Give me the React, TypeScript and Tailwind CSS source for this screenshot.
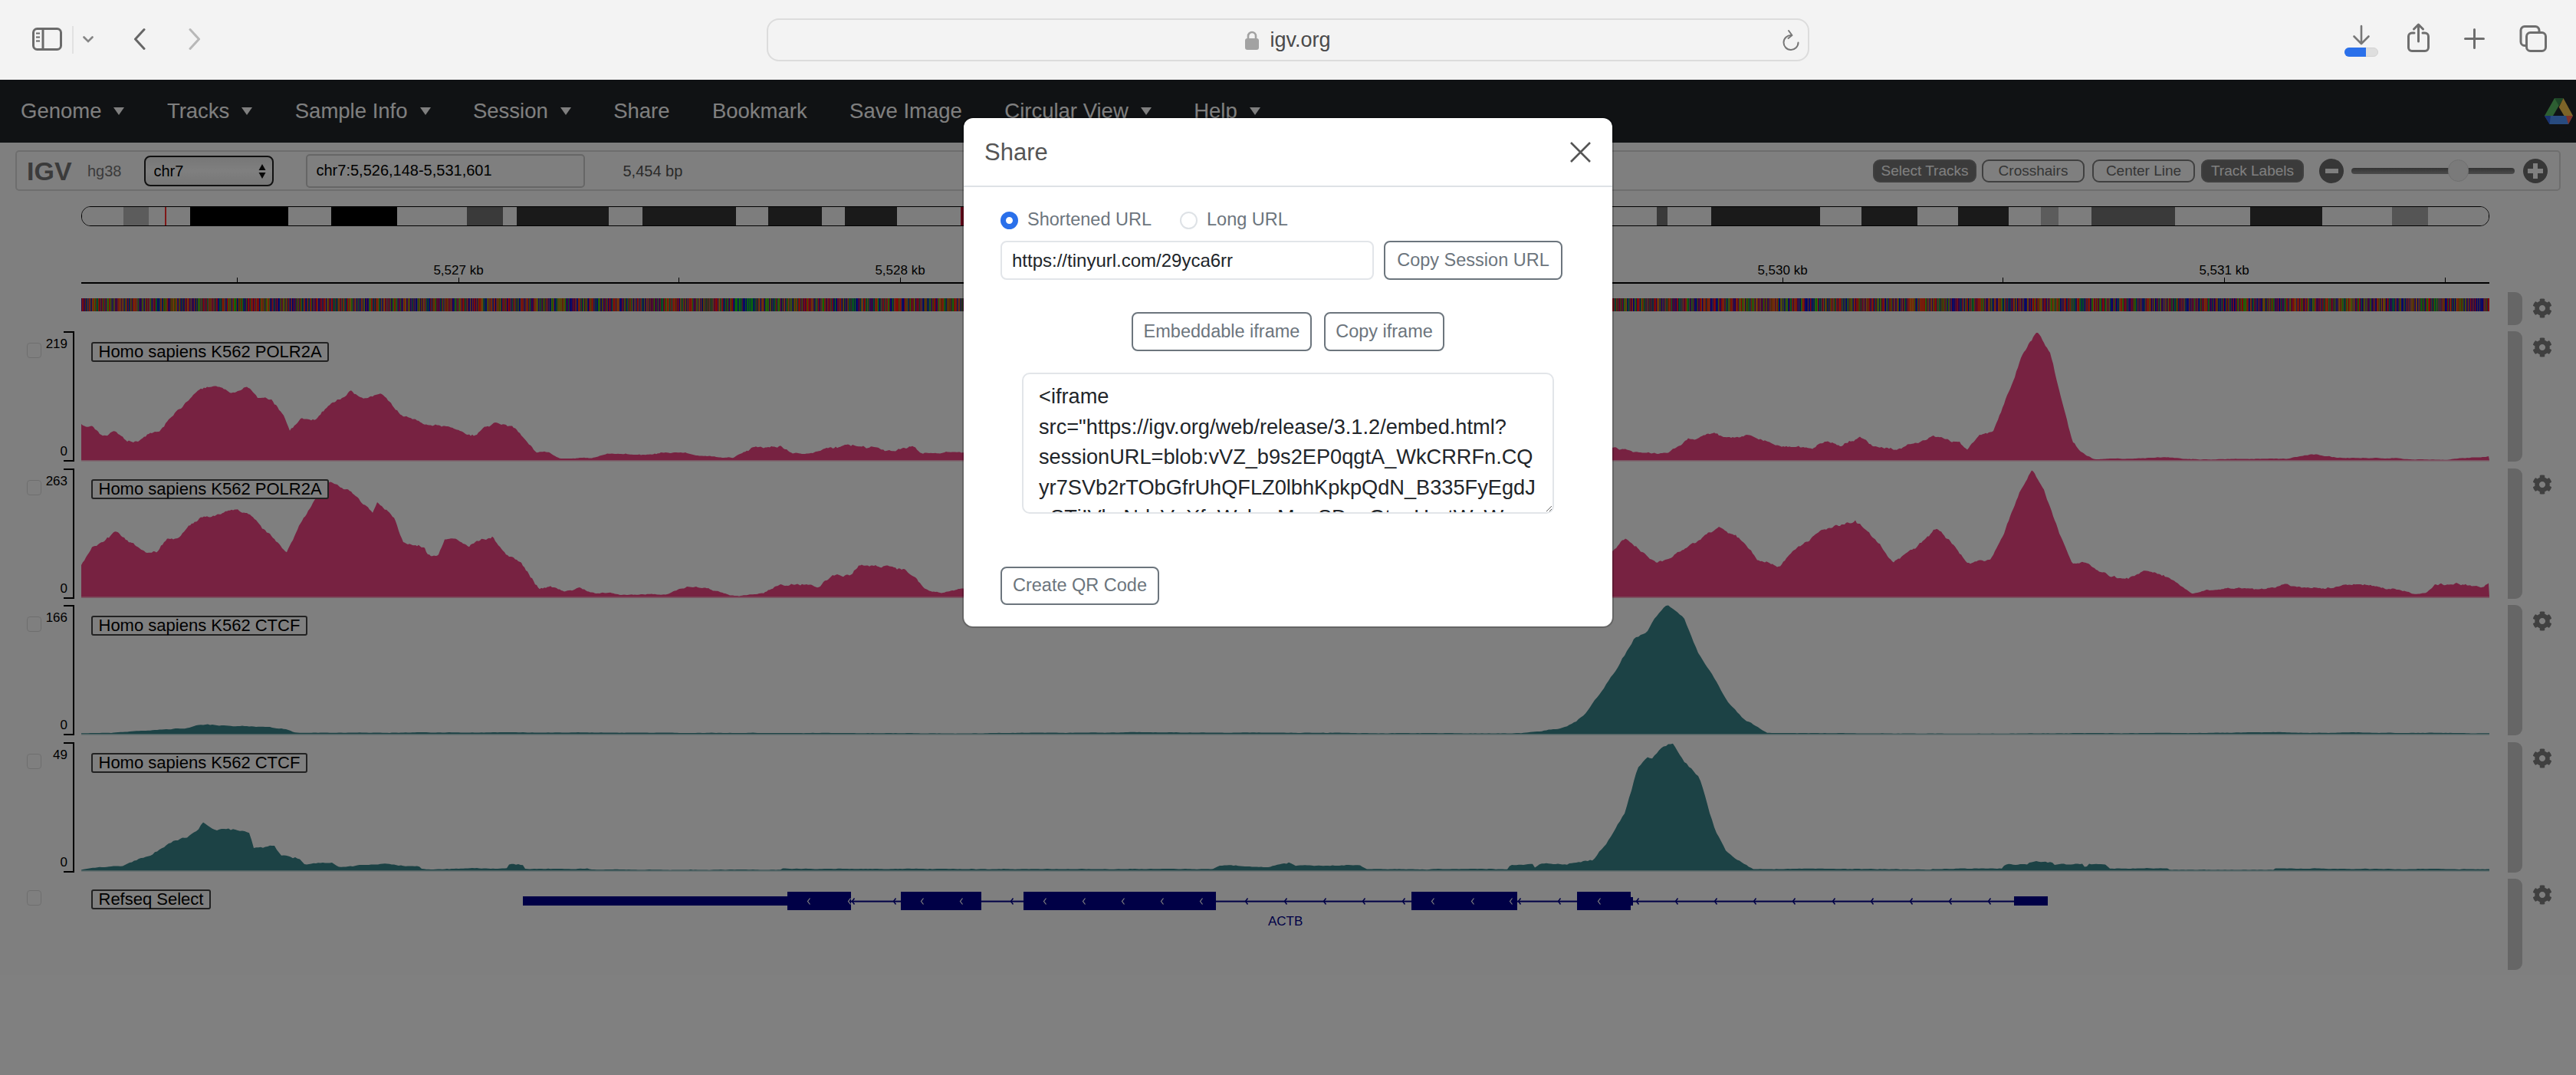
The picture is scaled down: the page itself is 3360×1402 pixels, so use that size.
import { FaCog } from 'react-icons/fa'

type Pt = [number, number]

// ── Data helpers ───────────────────────────────────────────────────────────

function rng(seed: number) {
  let s = seed
  return () => {
    s = (s + 0x6d2b79f5) | 0
    let t = Math.imul(s ^ (s >>> 15), 1 | s)
    t = (t + Math.imul(t ^ (t >>> 7), 61 | t)) ^ t
    return ((t ^ (t >>> 14)) >>> 0) / 4294967296
  }
}

const mapPts = (x0: number, sx: number, y0: number, list: Pt[]): Pt[] =>
  list.map(([x, y]) => [x0 + x / sx, y0 + y / 3])

// Turn the hand-read outline into a jagged coverage polygon
function coverage(outline: Pt[], base: number, seed: number, step: number, jitter: number) {
  const rand = rng(seed)
  const out: string[] = [`106,${base}`]
  let i = 0
  let walk = 0
  for (let x = 106; x <= 3247; x += step) {
    while (i < outline.length - 2 && outline[i + 1][0] < x) i++
    const [x1, y1] = outline[i]
    const [x2, y2] = outline[i + 1]
    const t = x2 === x1 ? 1 : Math.min(1, Math.max(0, (x - x1) / (x2 - x1)))
    const y = y1 + (y2 - y1) * t
    const h = base - y
    walk = walk * 0.85 + (rand() - 0.5) * jitter
    const n = (walk + (rand() - 0.5) * jitter * 0.5) * Math.min(1, 0.12 + h * 0.05)
    out.push(`${x},${Math.min(base, y + n).toFixed(1)}`)
  }
  out.push(`3247,${base}`)
  return out.join(' ')
}

const POL1: Pt[] = [
  ...mapPts(0, 1.2444, 400, [[132, 460], [150, 470], [165, 510], [185, 490], [208, 525], [225, 520], [240, 495], [258, 492], [280, 430], [300, 380], [325, 325], [350, 315], [375, 340], [400, 315], [420, 355], [440, 365], [460, 420], [470, 485], [490, 440], [510, 440], [535, 385], [570, 330], [590, 360], [620, 345], [650, 420], [690, 455], [720, 470], [770, 500], [805, 452], [835, 475], [870, 570], [890, 575], [910, 595], [960, 590], [990, 578], [1040, 582], [1060, 575], [1115, 570], [1130, 585], [1190, 590], [1220, 552], [1265, 547], [1285, 575], [1310, 575], [1340, 555], [1390, 542], [1450, 565], [1480, 545], [1495, 570], [1564, 572]]),
  ...mapPts(2100, 1.2444, 400, [[5, 553], [30, 562], [60, 575], [95, 572], [125, 517], [170, 497], [195, 518], [235, 508], [270, 545], [330, 553], [350, 525], [375, 542], [405, 510], [425, 543], [465, 558], [525, 508], [565, 535], [580, 555], [600, 500], [622, 490], [640, 380], [670, 180], [693, 97], [715, 180], [735, 380], [750, 525], [765, 570], [785, 597], [900, 590], [960, 597], [1100, 595], [1145, 577], [1180, 590], [1270, 592], [1300, 598], [1360, 599], [1395, 590], [1427, 587]]),
]

const POL2: Pt[] = [
  ...mapPts(0, 1.2444, 400, [[132, 1010], [150, 935], [170, 915], [190, 878], [220, 930], [240, 965], [255, 960], [270, 910], [290, 905], [310, 855], [325, 828], [350, 820], [385, 803], [410, 825], [440, 900], [465, 962], [485, 860], [510, 760], [535, 680], [565, 715], [605, 800], [612, 765], [640, 825], [655, 925], [690, 940], [695, 970], [710, 975], [722, 910], [740, 907], [760, 935], [800, 900], [820, 965], [845, 1000], [875, 1105], [895, 1095], [915, 1115], [940, 1103], [965, 1120], [990, 1118], [1005, 1128], [1080, 1125], [1115, 1095], [1150, 1098], [1185, 1130], [1200, 1132], [1240, 1120], [1260, 1093], [1300, 1085], [1330, 1100], [1350, 1060], [1380, 1050], [1397, 1008], [1440, 1013], [1470, 1035], [1485, 1060], [1500, 1100], [1530, 1118], [1564, 1105]]),
  ...mapPts(2100, 1.2444, 400, [[5, 960], [25, 912], [50, 960], [75, 997], [100, 982], [115, 955], [135, 925], [178, 870], [205, 895], [240, 990], [275, 1010], [300, 945], [340, 885], [398, 835], [430, 910], [460, 1000], [495, 950], [530, 868], [550, 910], [580, 1005], [617, 990], [640, 880], [665, 720], [685, 632], [705, 720], [730, 890], [750, 1005], [775, 1005], [795, 1045], [830, 1070], [875, 1037], [905, 1060], [945, 1125], [1005, 1098], [1055, 1105], [1095, 1090], [1140, 1105], [1185, 1097], [1235, 1090], [1280, 1107], [1305, 1124], [1325, 1118], [1340, 1090], [1390, 1085], [1415, 1102], [1427, 1085]]),
]

const CTCF1: Pt[] = [
  ...mapPts(0, 1.2444, 780, [[132, 529], [180, 527], [240, 517], [300, 507], [327, 492], [360, 500], [390, 500], [440, 507], [465, 515], [480, 527], [660, 526], [850, 526], [1560, 529]]),
  ...mapPts(1260, 1.2444, 780, [[320, 525], [480, 527], [860, 529], [900, 528], [935, 520], [965, 510], [985, 490], [1005, 450], [1030, 370], [1060, 260], [1085, 155], [1105, 135], [1120, 70], [1138, 27], [1165, 75], [1190, 220], [1215, 310], [1235, 400], [1260, 470], [1300, 528], [1568, 530]]),
  ...mapPts(2400, 1.6333, 780, [[460, 529], [790, 527], [940, 525], [1000, 527], [1070, 526], [1383, 529]]),
]

const CTCF2: Pt[] = [
  ...mapPts(0, 1.2444, 780, [[132, 1063], [160, 1052], [200, 1047], [230, 1018], [255, 990], [280, 945], [300, 940], [322, 900], [328, 870], [345, 900], [385, 905], [405, 915], [412, 975], [445, 965], [455, 1007], [485, 1020], [495, 1043], [515, 1030], [540, 1035], [550, 1050], [630, 1035], [680, 1050], [685, 1060], [825, 1058], [826, 1042], [850, 1042], [852, 1058], [955, 1058], [958, 1063], [1268, 1063], [1269, 1058], [1400, 1060], [1560, 1060]]),
  ...mapPts(1260, 1.2444, 780, [[400, 1060], [412, 1047], [490, 1050], [525, 1030], [535, 1047], [640, 1043], [650, 1060], [880, 1060], [883, 1043], [920, 1043], [922, 1058], [932, 1043], [975, 1040], [1018, 1030], [1040, 965], [1070, 840], [1090, 670], [1105, 625], [1115, 630], [1130, 580], [1148, 565], [1165, 630], [1190, 700], [1215, 900], [1235, 1000], [1278, 1060], [1500, 1060], [1568, 1063]]),
  ...mapPts(2400, 1.6333, 780, [[100, 1062], [262, 1058], [348, 1058], [350, 1042], [400, 1042], [402, 1033], [452, 1033], [455, 1042], [518, 1042], [524, 1060], [528, 1042], [568, 1042], [572, 1058], [698, 1058], [700, 1063], [923, 1063], [925, 1057], [1135, 1060], [1150, 1060], [1383, 1060]]),
]

// Band edges in page x
const BANDS: { x1: number; x2: number; fill: string }[] = [
  { x1: 160, x2: 193, fill: '#b8b8b8' }, { x1: 214, x2: 216, fill: '#ff3030' }, { x1: 247, x2: 375, fill: '#000000' },
  { x1: 431, x2: 517, fill: '#000000' }, { x1: 608, x2: 655, fill: '#747474' }, { x1: 673, x2: 793, fill: '#343434' },
  { x1: 837, x2: 959, fill: '#343434' }, { x1: 1001, x2: 1071, fill: '#343434' }, { x1: 1101, x2: 1169, fill: '#343434' },
  { x1: 1252, x2: 1262, fill: '#c01030' }, { x1: 2160, x2: 2174, fill: '#747474' }, { x1: 2231, x2: 2373, fill: '#343434' },
  { x1: 2427, x2: 2500, fill: '#343434' }, { x1: 2553, x2: 2619, fill: '#343434' }, { x1: 2661, x2: 2684, fill: '#b8b8b8' },
  { x1: 2727, x2: 2836, fill: '#747474' }, { x1: 2934, x2: 3028, fill: '#343434' }, { x1: 3119, x2: 3166, fill: '#ababab' },
]

// One base is under a pixel wide here, so neighbours blend as they do on the canvas
const SEQ = (() => {
  const rand = rng(41)
  const bars: { x: number; fill: string }[] = []
  for (let x = 0; x < 3141; x += 0.72) {
    const r = rand()
    const greenZone = (x > 850 && x < 880) || (x > 1000 && x < 1012)
    let fill = '#0000c8'
    if (greenZone ? r < 0.6 : r < 0.18) fill = '#00c800'
    else if (r < 0.4) fill = '#d17105'
    else if (r < 0.68) fill = '#ff0000'
    bars.push({ x, fill })
  }
  return bars
})()

const EXONS: Pt[] = [[1027, 1110], [1175, 1280], [1335, 1586], [1841, 1979], [2057, 2127]]
const INTRON_ARROWS = [1113, 1167, 1320, 1626, 1677, 1728, 1779, 1831, 1982, 2034, 2136, 2187, 2238, 2289, 2340, 2392, 2442, 2493, 2544, 2595]
const EXON_ARROWS = [1055, 1108, 1203, 1254, 1363, 1414, 1465, 1516, 1567, 1869, 1921, 1971, 2086]

const NAV_ITEMS = [
  { label: 'Genome', caret: true },
  { label: 'Tracks', caret: true },
  { label: 'Sample Info', caret: true },
  { label: 'Session', caret: true },
  { label: 'Share', caret: false },
  { label: 'Bookmark', caret: false },
  { label: 'Save Image', caret: false },
  { label: 'Circular View', caret: true },
  { label: 'Help', caret: true },
]

const IFRAME_TEXT = `<iframe
src="https://igv.org/web/release/3.1.2/embed.html?
sessionURL=blob:vVZ_b9s2EP0qgtA_WkCRRFn.CQ
yr7SVb2rTObGfrUhQFLZ0lbhKpkpQdN_B335FyEgdJ
uSTjIVbsNdsVqXfgWyhgrMppSDzqGtqgUrgtWaW`

// ── Browser chrome ─────────────────────────────────────────────────────────

function BrowserBar() {
  return (
    <div className="flex h-[104px] items-center bg-[#f3f3f3]">
      <div className="flex w-[1000px] shrink-0 items-center pl-[42px]">
        <svg width="39" height="56" viewBox="0 0 39 56" fill="none" stroke="#6b6b6b" strokeWidth="3">
          <rect x="1.5" y="13.5" width="36" height="27" rx="5" />
          <path d="M14 13v28" />
          <path d="M5 19.5h5M5 24.5h5M5 29.5h5" strokeWidth="2" />
        </svg>
        <div className="ml-[13px] h-[36px] w-[2px] bg-[#e2e2e2]" />
        <svg className="ml-[12px]" width="14" height="56" viewBox="0 0 14 56" fill="none" stroke="#858585" strokeWidth="2.6" strokeLinecap="round">
          <path d="M1.5 24.5 7 30l5.5-5.5" />
        </svg>
        <svg className="ml-[52px]" width="16" height="56" viewBox="0 0 16 56" fill="none" stroke="#666666" strokeWidth="3" strokeLinecap="round" strokeLinejoin="round">
          <path d="M14 14.5 2.5 27 14 39.5" />
        </svg>
        <svg className="ml-[56px]" width="16" height="56" viewBox="0 0 16 56" fill="none" stroke="#b8b8b8" strokeWidth="3" strokeLinecap="round" strokeLinejoin="round">
          <path d="M2 14.5 13.5 27 2 39.5" />
        </svg>
      </div>

      <div className="relative flex h-[56px] w-[1360px] shrink-0 items-center justify-center gap-[14px] rounded-[16px] border-2 border-[#dcdcdc]">
        <svg width="18" height="25" viewBox="0 0 18 25" fill="none">
          <rect y="10" width="18" height="15" rx="3" fill="#a2a2a2" />
          <path d="M4 11V7a5 5 0 0 1 10 0v4" stroke="#a2a2a2" strokeWidth="2.6" />
        </svg>
        <span className="text-[27px] leading-none text-[#4a4a4a]">igv.org</span>
        <svg className="absolute right-[11px] top-[12px]" width="22" height="28" viewBox="0 0 22 28" fill="none" stroke="#777777" strokeWidth="2" strokeLinecap="round" strokeLinejoin="round">
          <path d="M11.5 8A9.5 9.5 0 1 0 20.5 17.5" />
          <path d="M8 2l4.5 6-5 4" />
        </svg>
      </div>

      <div className="flex items-center pl-[698px]">
        <svg width="44" height="56" viewBox="0 0 44 56" fill="none">
          <path d="M22 10v22M12.5 23.5 22 33l9.5-9.5" stroke="#777777" strokeWidth="2.6" strokeLinecap="round" strokeLinejoin="round" />
          <rect x="0.5" y="38.5" width="43" height="11" rx="5.5" fill="#dedede" stroke="#d2d2d2" />
          <path d="M6 38h22v12H6a6 6 0 0 1 0-12z" fill="#2a70ea" />
        </svg>
        <svg className="ml-[38px]" width="29" height="56" viewBox="0 0 29 56" fill="none" stroke="#6e6e6e" strokeWidth="3" strokeLinecap="round" strokeLinejoin="round">
          <path d="M9 19H6a4.5 4.5 0 0 0-4.5 4.5V38A4.5 4.5 0 0 0 6 42.5h17a4.5 4.5 0 0 0 4.5-4.5V23.5A4.5 4.5 0 0 0 23 19h-3" />
          <path d="M14.5 8.5V30M8.5 14l6-6 6 6" />
        </svg>
        <svg className="ml-[45px]" width="27" height="56" viewBox="0 0 27 56" fill="none" stroke="#6e6e6e" strokeWidth="3" strokeLinecap="round">
          <path d="M13.5 14.5v24M1.5 26.5h24" />
        </svg>
        <svg className="ml-[45px]" width="36" height="56" viewBox="0 0 36 56" fill="none" stroke="#6e6e6e" strokeWidth="3" strokeLinecap="round">
          <rect x="9.5" y="18.5" width="25" height="24" rx="5" />
          <path d="M7.5 35.5H7a5 5 0 0 1-5-5v-15a5 5 0 0 1 5-5h14a5 5 0 0 1 5 5V17" />
        </svg>
      </div>
    </div>
  )
}

// ── IGV navbar and toolbar ─────────────────────────────────────────────────

function Navbar() {
  return (
    <div className="flex h-[82px] items-center gap-[55.4px] bg-[#212529] pl-[27px] pr-[4px] text-[27.5px] leading-none text-white">
      {NAV_ITEMS.map(item => (
        <div key={item.label} className="flex items-center gap-[16px]">
          <span>{item.label}</span>
          {item.caret && <span className="h-0 w-0 border-x-[7px] border-t-[10px] border-x-transparent border-t-white" />}
        </div>
      ))}
      <svg className="ml-auto" width="37" height="34" viewBox="0 0 37 34">
        <polygon points="13,0 24.5,0 11,23 0,23" fill="#5abe64" />
        <polygon points="18.7,11.7 24.5,0 37,23 25.5,23" fill="#fac850" />
        <polygon points="13,0 24.5,0 18.7,10" fill="#3c8c50" />
        <polygon points="0,23 37,23 31,34 6.5,34" fill="#5096ff" />
        <polygon points="28,23 37,23 31,34" fill="#ff6450" />
        <polygon points="0,23 8,23 6.5,34" fill="#3264dc" />
      </svg>
    </div>
  )
}

function ToggleButton({ label, on, className }: { label: string; on?: boolean; className: string }) {
  return (
    <button className={`flex h-[30px] items-center justify-center rounded-[9px] border-2 border-[#808080] text-[19px] leading-none ${on ? 'bg-[#777777] text-white' : 'bg-white text-[#6b6b6b]'} ${className}`}>
      {label}
    </button>
  )
}

function Toolbar() {
  return (
    <div className="mx-[20px] mt-[10px] flex h-[53px] items-center rounded-[5px] border-2 border-[#dcdcdc] pl-[13px] pr-[15px] text-[20px]">
      <span className="w-[58px] text-[34px] font-bold leading-none text-[#777777]">IGV</span>
      <span className="ml-[21px] text-[#777777]">hg38</span>
      <div className="relative ml-[29px] h-[40px] w-[169px]">
        <select className="h-full w-full appearance-none rounded-[8px] border-2 border-[#222222] bg-gradient-to-b from-[#eeeeee] via-[#ffffff] to-[#eeeeee] pl-[11px] text-black outline-none">
          <option>chr7</option>
        </select>
        <svg className="absolute right-[10px] top-[11px]" width="10" height="19" viewBox="0 0 10 19" fill="#111111">
          <path d="M5 0l4.5 8H.5zM5 19 .5 11h9z" />
        </svg>
      </div>
      <input
        readOnly
        value="chr7:5,526,148-5,531,601"
        className="ml-[42px] h-[44px] w-[364px] rounded-[5px] border-2 border-[#cccccc] pl-[12px] text-black outline-none"
      />
      <span className="ml-[50px] text-[#555555]">5,454 bp</span>

      <div className="ml-auto flex items-center">
        <ToggleButton label="Select Tracks" on className="w-[135px]" />
        <ToggleButton label="Crosshairs" className="ml-[7px] w-[134px]" />
        <ToggleButton label="Center Line" className="ml-[10px] w-[134px]" />
        <ToggleButton label="Track Labels" on className="ml-[8px] w-[134px]" />
        <div className="ml-[20px] flex h-[32px] w-[32px] items-center justify-center rounded-full bg-[#6e6e6e]">
          <span className="h-[6px] w-[17px] bg-white" />
        </div>
        <div className="relative ml-[10px] h-[8px] w-[213px] rounded-[4px] bg-gradient-to-b from-[#666666] to-[#999999]">
          <span className="absolute left-[126px] top-[-11px] h-[29px] w-[27px] rounded-full border border-[#e0e0e0] bg-[#f4f4f4]" />
        </div>
        <div className="relative ml-[11px] flex h-[32px] w-[32px] items-center justify-center rounded-full bg-[#6e6e6e]">
          <span className="h-[6px] w-[20px] bg-white" />
          <span className="absolute h-[20px] w-[6px] bg-white" />
        </div>
      </div>
    </div>
  )
}

// ── Genome view ────────────────────────────────────────────────────────────

function Ideogram() {
  return (
    <div className="ml-[106px] mt-[20px] h-[26px] w-[3141px] overflow-hidden rounded-[12px] border-[1.5px] border-black">
      <svg className="block" width="3141" height="26" viewBox="106 0 3141 26" shapeRendering="crispEdges">
        <rect x="106" y="0" width="3141" height="26" fill="#fbfbfb" />
        {BANDS.map(b => <rect key={b.x1} x={b.x1} y="0" width={b.x2 - b.x1} height="26" fill={b.fill} />)}
      </svg>
    </div>
  )
}

function Ruler() {
  const ticks = [309, 598, 885, 1174, 2325, 2612, 2901, 3189]
  const labels = [
    { text: '5,527 kb', pos: 'left-[492px]' },
    { text: '5,528 kb', pos: 'left-[1068px]' },
    { text: '5,530 kb', pos: 'left-[2219px]' },
    { text: '5,531 kb', pos: 'left-[2795px]' },
  ]
  return (
    <div className="relative ml-[106px] mt-[50px] h-[36px] w-[3141px]">
      {labels.map(l => (
        <span key={l.text} className={`absolute top-[-2px] w-[100px] -translate-x-1/2 text-center text-[17px] leading-[20px] text-black ${l.pos}`}>
          {l.text}
        </span>
      ))}
      <svg className="absolute left-0 top-[16px]" width="3141" height="10" viewBox="106 0 3141 10" shapeRendering="crispEdges">
        <rect x="106" y="7" width="3141" height="2" fill="#000000" />
        {ticks.map(t => <rect key={t} x={t} y="1" width="1" height="6" fill="#000000" />)}
      </svg>
    </div>
  )
}

function TrackControls({ height }: { height: string }) {
  return (
    <>
      <div className={`ml-[24px] w-[19px] shrink-0 rounded-r-[9px] bg-[#cdcdcd] ${height}`} />
      <FaCog className="ml-[13px] mt-[8px] shrink-0 text-[26px] text-[#808080]" />
    </>
  )
}

function SequenceRow() {
  return (
    <div className="flex h-[51px] pl-[106px]">
      <svg className="mt-[8px] block" width="3141" height="17" viewBox="0 0 3141 17">
        {SEQ.map(b => <rect key={b.x} x={b.x} y="0" width="1" height="17" fill={b.fill} />)}
      </svg>
      <TrackControls height="h-[43px]" />
    </div>
  )
}

function TrackLabel({ text }: { text: string }) {
  return (
    <span className="absolute left-[13px] top-[14px] h-[26px] rounded-[3px] border-2 border-[#444444] bg-white px-[7.5px] text-[22px] leading-[21px] text-black">
      {text}
    </span>
  )
}

function CheckBox() {
  return <span className="ml-[35px] mt-[15px] h-[20px] w-[19px] shrink-0 rounded-[4px] border border-[#dddddd] bg-white" />
}

interface Track {
  label: string
  max: string
  top: number
  base: number
  points: string
  color: string
}

const TRACKS: Track[] = [
  { label: 'Homo sapiens K562 POLR2A', max: '219', top: 432, base: 600, points: coverage(POL1, 600, 1, 2, 2.4), color: '#ee4482' },
  { label: 'Homo sapiens K562 POLR2A', max: '263', top: 611, base: 778.5, points: coverage(POL2, 778.5, 2, 2, 2.4), color: '#ee4482' },
  { label: 'Homo sapiens K562 CTCF', max: '166', top: 789, base: 957, points: coverage(CTCF1, 957, 3, 3, 1.6), color: '#38848a' },
  { label: 'Homo sapiens K562 CTCF', max: '49', top: 968, base: 1135, points: coverage(CTCF2, 1135, 4, 3, 2.4), color: '#38848a' },
]

function WigTrack({ track }: { track: Track }) {
  return (
    <div className="flex h-[178.5px]">
      <div className="flex w-[106px] shrink-0 items-start">
        <CheckBox />
        <div className="relative ml-[29px] h-[170px] w-[14px] border-y-2 border-r-2 border-black text-[17px] leading-[20px] text-black">
          <span className="absolute right-[7px] top-[5px]">{track.max}</span>
          <span className="absolute bottom-[1px] right-[7px]">0</span>
        </div>
      </div>
      <div className="relative h-[170px] w-[3141px] shrink-0">
        <svg className="block" width="3141" height="170" viewBox={`106 ${track.top} 3141 170`}>
          <polygon points={track.points} fill={track.color} />
          <rect x="106" y={track.base} width="3141" height="1.5" fill={track.color} opacity="0.45" />
        </svg>
        <TrackLabel text={track.label} />
      </div>
      <TrackControls height="h-[170px]" />
    </div>
  )
}

function GeneTrack() {
  const navy = '#00008c'
  return (
    <div className="flex h-[119px]">
      <div className="flex w-[106px] shrink-0 items-start">
        <CheckBox />
      </div>
      <div className="relative h-[119px] w-[3141px] shrink-0">
        <svg className="block" width="3141" height="60" viewBox="106 1146 3141 60">
          <rect x="682" y="1169" width="345" height="12" fill={navy} />
          <rect x="2627" y="1169" width="44" height="12" fill={navy} />
          <rect x="1110" y="1174.6" width="1517" height="2" fill={navy} />
          <rect x="2127" y="1170" width="3" height="11" fill={navy} />
          {EXONS.map(([x1, x2]) => <rect key={x1} x={x1} y="1163" width={x2 - x1} height="24" fill={navy} />)}
          {INTRON_ARROWS.map(x => (
            <path key={x} d={`M${x + 1.5} 1171.5 L${x - 1.5} 1175.5 L${x + 1.5} 1179.5`} fill="none" stroke={navy} strokeWidth="1.5" />
          ))}
          {EXON_ARROWS.map(x => (
            <path key={x} d={`M${x + 1.5} 1171.5 L${x - 1.5} 1175.5 L${x + 1.5} 1179.5`} fill="none" stroke="#ffffff" strokeWidth="1.2" />
          ))}
        </svg>
        <TrackLabel text="Refseq Select" />
        <span className="absolute left-[1548px] top-[46px] text-[17px] leading-[20px] text-[#00008c]">ACTB</span>
      </div>
      <TrackControls height="h-[119px]" />
    </div>
  )
}

// ── Share dialog ───────────────────────────────────────────────────────────

function OutlineButton({ label, className }: { label: string; className: string }) {
  return (
    <button className={`flex items-center justify-center rounded-[8px] border-2 border-[#6c757d] text-[23.5px] leading-none text-[#6c757d] ${className}`}>
      {label}
    </button>
  )
}

function ShareDialog() {
  return (
    <div className="absolute left-[1255px] top-[152px] w-[850px] rounded-[14px] border-2 border-black/20 bg-white bg-clip-padding">
      <div className="flex h-[90px] items-center justify-between border-b-2 border-[#dee2e6] pl-[27px] pr-[28px]">
        <span className="text-[31px] leading-none text-[#555555]">Share</span>
        <svg width="27" height="27" viewBox="0 0 27 27" fill="none" stroke="#555555" strokeWidth="2.6">
          <path d="M1 1l25 25M26 1 1 26" />
        </svg>
      </div>

      <div className="px-[48px] pb-[28px] pt-[27px] text-[23.5px] text-[#6c757d]">
        <div className="flex h-[32px] items-center">
          <span className="h-[23px] w-[23px] rounded-full border-[7px] border-[#2a70ea] bg-white" />
          <span className="ml-[12px] w-[164px] leading-none">Shortened URL</span>
          <span className="ml-[35px] h-[23px] w-[23px] rounded-full border-2 border-[#dee2e6] bg-white" />
          <span className="ml-[12px] leading-none">Long URL</span>
        </div>

        <div className="mt-[11px] flex">
          <input
            readOnly
            value="https://tinyurl.com/29yca6rr"
            className="h-[51px] w-[487px] rounded-[8px] border-2 border-[#e2e5e9] pl-[13px] text-[24px] text-[#212529] outline-none"
          />
          <OutlineButton label="Copy Session URL" className="ml-[13px] h-[51px] w-[233px]" />
        </div>

        <div className="mt-[42px] flex justify-center gap-[16px]">
          <OutlineButton label="Embeddable iframe" className="h-[51px] w-[235px]" />
          <OutlineButton label="Copy iframe" className="h-[51px] w-[157px]" />
        </div>

        <textarea
          readOnly
          wrap="off"
          defaultValue={IFRAME_TEXT}
          className="mx-auto mt-[28px] block h-[184px] w-[694px] resize-y overflow-hidden rounded-[10px] border-2 border-[#e2e5e9] px-[20px] py-[9px] text-[27.2px] leading-[39.5px] text-[#212529] outline-none"
        />

        <OutlineButton label="Create QR Code" className="mt-[69px] h-[50px] w-[207px]" />
      </div>
    </div>
  )
}

// ── Page ───────────────────────────────────────────────────────────────────

export default function App() {
  return (
    <div className="relative h-[1402px] w-[3360px] overflow-hidden bg-white font-['Liberation_Sans',Arial,sans-serif]">
      <BrowserBar />
      <Navbar />
      <Toolbar />
      <Ideogram />
      <Ruler />
      <SequenceRow />
      {TRACKS.map(t => <WigTrack key={t.top} track={t} />)}
      <GeneTrack />

      {/* Modal backdrop stops at the browser's own bar */}
      <div className="absolute inset-x-0 bottom-0 top-[104px] bg-black/50" />
      <ShareDialog />
    </div>
  )
}
